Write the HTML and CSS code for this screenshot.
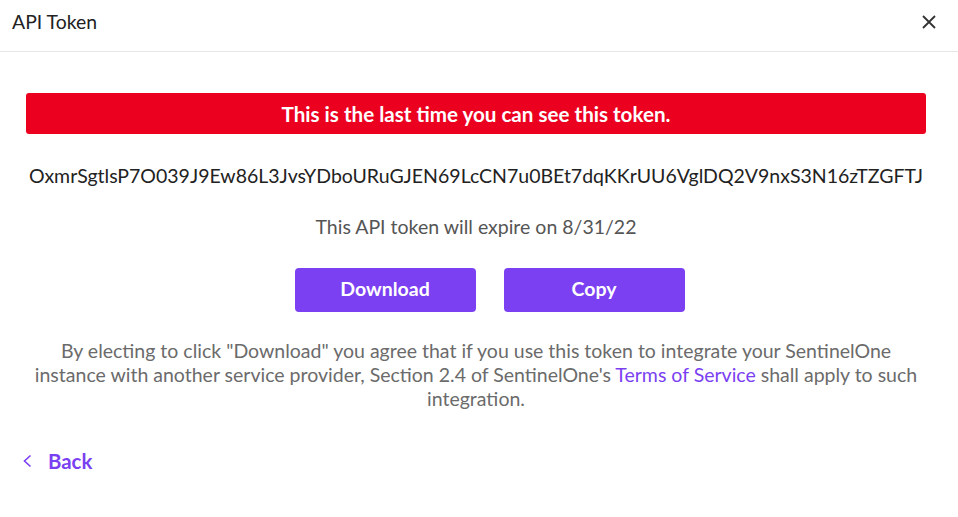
FILE: index.html
```html
<!DOCTYPE html>
<html>
<head>
<meta charset="utf-8" />
<title>API Token</title>
<link rel="stylesheet" href="styles.css">
</head>
<body>
<div class="modal">
  <div class="modalHeader">
    <div class="modalTitle">API Token</div>
    <button class="closeBtn" type="button" title="Close">
      <svg width="14" height="14" viewBox="0 0 14 14"><path d="M1 1 L13 13 M13 1 L1 13" stroke="#333" stroke-width="1.8" fill="none" /></svg>
    </button>
  </div>
  <div class="modalBody">
    <div class="warning">This is the last time you can see this token.</div>
    <div class="token">OxmrSgtlsP7O039J9Ew86L3JvsYDboURuGJEN69LcCN7u0BEt7dqKKrUU6VglDQ2V9nxS3N16zTZGFTJ</div>
    <div class="expire">This API token will expire on 8/31/22</div>
    <div class="actions">
      <button class="btn" type="button">Download</button>
      <button class="btn" type="button">Copy</button>
    </div>
    <p class="legal">By electing to click "Download" you agree that if you use this token to integrate your SentinelOne instance with another service provider, Section 2.4 of SentinelOne's <a href="#">Terms of Service</a> shall apply to such integration.</p>
    <a class="back" href="#">
      <svg width="9" height="14" viewBox="0 0 9 14"><path d="M7.5 1.5 L1.5 7 L7.5 12.5" stroke="#7b3ff2" stroke-width="1.6" fill="none" /></svg>
      <span>Back</span>
    </a>
  </div>
</div>
</body>
</html>
```

FILE: styles.css
```css
html, body {
  margin: 0; padding: 0;
  background: white;
  font-family: Lato, "Open Sans", Arial, sans-serif;
  color: #222;
}
.modal {
  width: 958px;
  height: 517px;
  box-sizing: border-box;
}
.modalHeader {
  display: flex;
  align-items: center;
  justify-content: space-between;
  height: 52px;
  box-sizing: border-box;
  padding: 0 22px 8px 12px;
  border-bottom: 1px solid #e6e6e6;
}
.modalTitle {
  font-size: 19.4px;
  color: #222;
}
.closeBtn {
  background: transparent;
  border: none;
  padding: 0;
  width: 14px;
  height: 14px;
  cursor: pointer;
  display: flex;
}
.modalBody {
  padding: 41px 32px 0 26px;
  display: flex;
  flex-direction: column;
  align-items: center;
}
.warning {
  align-self: stretch;
  height: 41px;
  line-height: 42px;
  background: #ec0020;
  color: white;
  border-radius: 3px;
  text-align: center;
  font-weight: 700;
  font-size: 20.6px;
}
.token {
  margin-top: 30px;
  font-size: 19.5px;
  line-height: 24px;
  color: #222;
  white-space: nowrap;
}
.expire {
  margin-top: 27px;
  font-size: 19.5px;
  line-height: 24px;
  color: #555;
}
.actions {
  display: flex;
  gap: 28px;
  margin-top: 29px;
  padding-left: 27px;
}
.btn {
  width: 181px;
  height: 44px;
  padding: 0 0 4px;
  border: none;
  border-radius: 4px;
  background: #7b40f2;
  color: white;
  font-family: inherit;
  font-weight: 700;
  font-size: 19.5px;
  cursor: pointer;
}
.legal {
  margin: 27px 0 0;
  font-size: 19.5px;
  line-height: 24px;
  color: #6b6b6b;
  text-align: center;
}
.legal a {
  color: #7b3ff2;
  text-decoration: none;
}
.back {
  align-self: flex-start;
  display: flex;
  align-items: center;
  gap: 16px;
  margin: 38px 0 0 -3px;
  text-decoration: none;
  color: #7b3ff2;
  font-weight: 700;
  font-size: 20.4px;
}
```
